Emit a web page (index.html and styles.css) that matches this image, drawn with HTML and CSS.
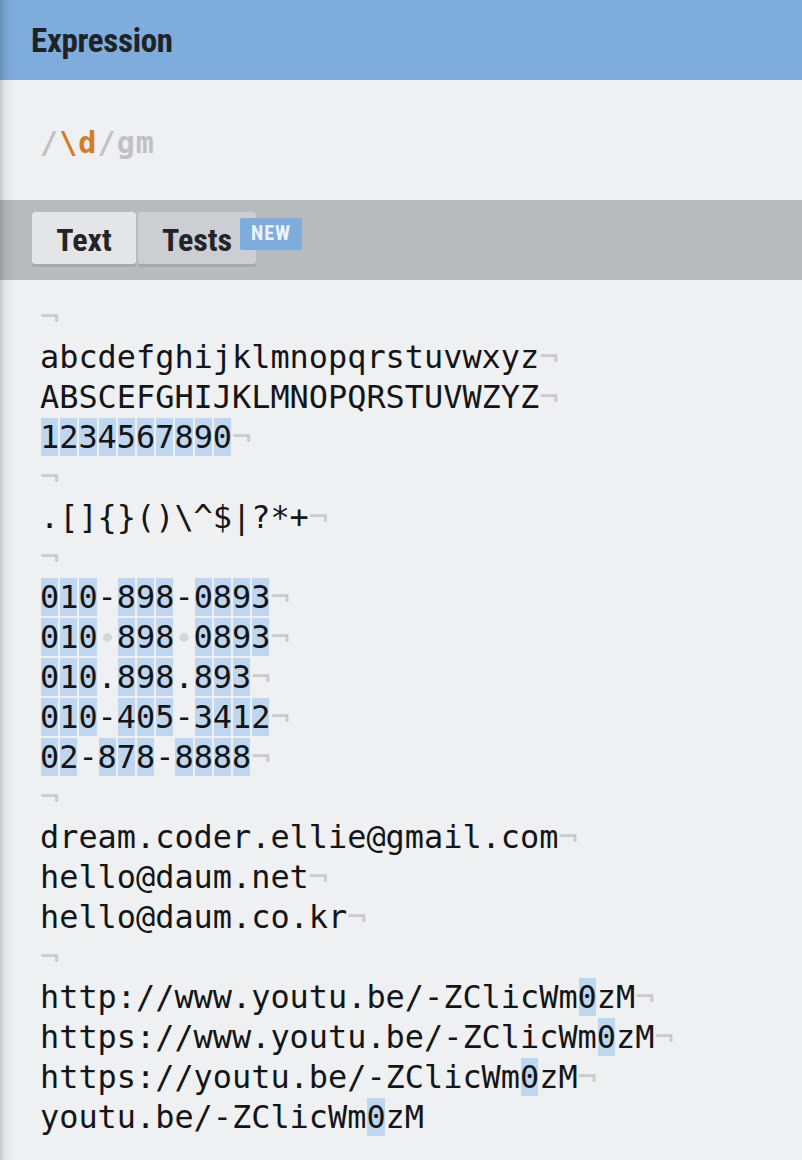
FILE: index.html
```html
<!DOCTYPE html>
<html lang="en">
<head>
<meta charset="utf-8">
<title>Expression</title>
<link rel="stylesheet" href="styles.css">
</head>
<body>
<div class="app">
  <header class="hdr"><h1 class="hdr-title">Expression</h1></header>
  <div class="expr"><span class="delim">/</span><span class="esc">\d</span><span class="delim">/</span><span class="flags">gm</span></div>
  <nav class="tabbar">
    <button class="tab tab-active">Text</button>
    <button class="tab">Tests<span class="badge">NEW</span></button>
  </nav>
  <div class="editor">
    <div class="ln"><span class="eol">¬</span></div>
    <div class="ln">abcdefghijklmnopqrstuvwxyz<span class="eol">¬</span></div>
    <div class="ln">ABSCEFGHIJKLMNOPQRSTUVWZYZ<span class="eol">¬</span></div>
    <div class="ln"><span class="m">1</span><span class="m">2</span><span class="m">3</span><span class="m">4</span><span class="m">5</span><span class="m">6</span><span class="m">7</span><span class="m">8</span><span class="m">9</span><span class="m">0</span><span class="eol">¬</span></div>
    <div class="ln"><span class="eol">¬</span></div>
    <div class="ln">.[]{}()\^$|?*+<span class="eol">¬</span></div>
    <div class="ln"><span class="eol">¬</span></div>
    <div class="ln"><span class="m">0</span><span class="m">1</span><span class="m">0</span>-<span class="m">8</span><span class="m">9</span><span class="m">8</span>-<span class="m">0</span><span class="m">8</span><span class="m">9</span><span class="m">3</span><span class="eol">¬</span></div>
    <div class="ln"><span class="m">0</span><span class="m">1</span><span class="m">0</span><span class="sp"> </span><span class="m">8</span><span class="m">9</span><span class="m">8</span><span class="sp"> </span><span class="m">0</span><span class="m">8</span><span class="m">9</span><span class="m">3</span><span class="eol">¬</span></div>
    <div class="ln"><span class="m">0</span><span class="m">1</span><span class="m">0</span>.<span class="m">8</span><span class="m">9</span><span class="m">8</span>.<span class="m">8</span><span class="m">9</span><span class="m">3</span><span class="eol">¬</span></div>
    <div class="ln"><span class="m">0</span><span class="m">1</span><span class="m">0</span>-<span class="m">4</span><span class="m">0</span><span class="m">5</span>-<span class="m">3</span><span class="m">4</span><span class="m">1</span><span class="m">2</span><span class="eol">¬</span></div>
    <div class="ln"><span class="m">0</span><span class="m">2</span>-<span class="m">8</span><span class="m">7</span><span class="m">8</span>-<span class="m">8</span><span class="m">8</span><span class="m">8</span><span class="m">8</span><span class="eol">¬</span></div>
    <div class="ln"><span class="eol">¬</span></div>
    <div class="ln">dream.coder.ellie@gmail.com<span class="eol">¬</span></div>
    <div class="ln">hello@daum.net<span class="eol">¬</span></div>
    <div class="ln">hello@daum.co.kr<span class="eol">¬</span></div>
    <div class="ln"><span class="eol">¬</span></div>
    <div class="ln">http://www.youtu.be/-ZClicWm<span class="m">0</span>zM<span class="eol">¬</span></div>
    <div class="ln">https://www.youtu.be/-ZClicWm<span class="m">0</span>zM<span class="eol">¬</span></div>
    <div class="ln">https://youtu.be/-ZClicWm<span class="m">0</span>zM<span class="eol">¬</span></div>
    <div class="ln">youtu.be/-ZClicWm<span class="m">0</span>zM</div>
  </div>
</div>
</body>
</html>
```
FILE: styles.css
```css
html, body {
  margin: 0;
  padding: 0;
  background: #eef0f2;
}

.app {
  position: relative;
  width: 802px;
  min-height: 1160px;
  background: #eef0f2;
  font-family: Roboto, "Liberation Sans", sans-serif;
}

.app::before {
  content: "";
  position: absolute;
  left: 0;
  top: 0;
  bottom: 0;
  width: 14px;
  background: linear-gradient(to right, rgba(0, 0, 0, 0.17), rgba(0, 0, 0, 0.06) 5px, rgba(0, 0, 0, 0));
  pointer-events: none;
  z-index: 5;
}

.hdr {
  height: 80px;
  background: #7eacdd;
  display: flex;
  align-items: center;
  padding-left: 31px;
  box-sizing: border-box;
}

.hdr-title {
  margin: 0;
  font-family: Roboto, "Liberation Sans", sans-serif;
  font-weight: 700;
  font-size: 33px;
  font-stretch: 75%;
  color: #202326;
  letter-spacing: -0.3px;
  line-height: 1;
  padding-top: 1px;
}

.expr {
  height: 120px;
  box-sizing: border-box;
  padding: 45px 0 0 40px;
  font-family: "DejaVu Sans Mono", monospace;
  font-weight: 700;
  font-size: 30px;
  letter-spacing: 1.1px;
  line-height: 36px;
  white-space: pre;
}

.delim, .flags {
  color: #bfc1c4;
}

.esc {
  color: #d77a26;
}

.tabbar {
  height: 80px;
  box-sizing: border-box;
  background: #b8bbbe;
  display: flex;
  gap: 2px;
  padding: 12px 0 0 32px;
  align-items: flex-start;
}

.tab {
  position: relative;
  box-sizing: border-box;
  border: 0;
  margin: 0;
  padding: 4px 0 0;
  border-radius: 4px 4px 3px 3px;
  background: #cdced1;
  box-shadow: 0 3px 0 #a6a9ac;
  font-family: Roboto, "Liberation Sans", sans-serif;
  font-stretch: 75%;
  font-weight: 700;
  font-size: 32px;
  color: #222528;
  width: 118px;
  text-align: center;
  line-height: 48px;
  height: 52px;
}

.tab-active {
  width: 104px;
  background: #e4e5e7;
}

.badge {
  position: absolute;
  left: 102px;
  top: 6px;
  width: 62px;
  height: 32px;
  background: #7eacdd;
  border-radius: 2px;
  color: #eef3fb;
  font-size: 20px;
  font-weight: 700;
  letter-spacing: 1px;
  line-height: 30px;
  text-align: center;
}

.editor {
  padding: 17px 0 20px 40px;
  font-family: "DejaVu Sans Mono", monospace;
  font-size: 31.9px;
  line-height: 40px;
  color: #131517;
}

.ln {
  height: 40px;
  white-space: pre;
}

.m {
  background: linear-gradient(#bed6ef, #bed6ef) no-repeat;
  background-size: calc(100% - 2px) 100%;
  background-position: 1px 0;
}

.sp {
  display: inline-block;
  width: 1ch;
  height: 40px;
  vertical-align: top;
  background: radial-gradient(circle at 50% 51%, #d5d7d9 4px, rgba(213, 215, 217, 0) 4.8px);
}

.eol {
  color: #c9cbcd;
  font-weight: 300;
}
```
